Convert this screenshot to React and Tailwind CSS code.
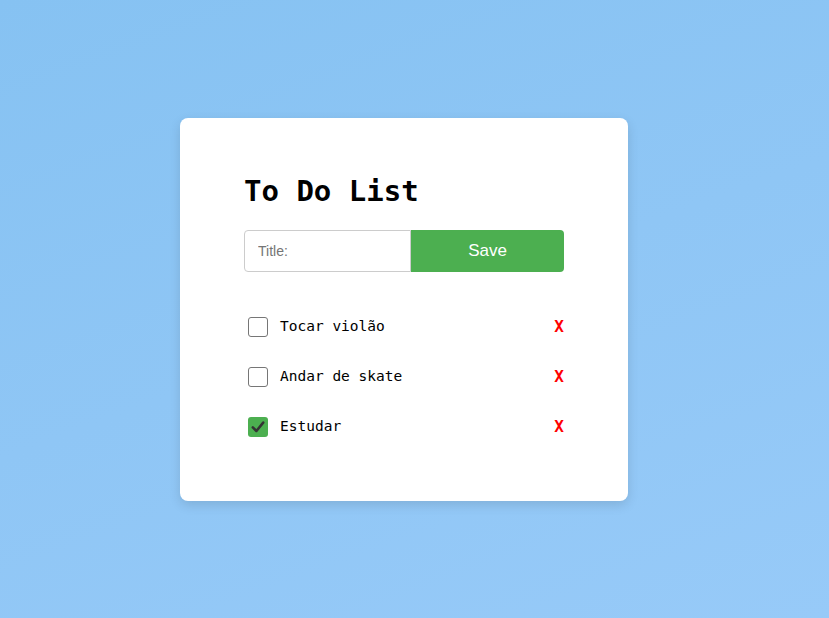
import { useState } from "react";

const mono = { fontFamily: '"DejaVu Sans Mono", "Liberation Mono", monospace' };

function Box({ checked, onClick }) {
  if (checked) {
    return (
      <button onClick={onClick} className="flex h-5 w-5 items-center justify-center rounded-[3px] bg-[#4caf50]">
        <svg viewBox="0 0 20 20" className="h-[16px] w-[16px]">
          <path d="M3.5 10.5 L8 15 L16.5 4.5" fill="none" stroke="#333" strokeWidth="3.2" strokeLinecap="round" strokeLinejoin="round" />
        </svg>
      </button>
    );
  }
  return <button onClick={onClick} className="h-5 w-5 rounded-[3px] border border-[#767676] bg-white" />;
}

export default function App() {
  const [items, setItems] = useState([
    { id: 1, title: "Tocar violão", done: false },
    { id: 2, title: "Andar de skate", done: false },
    { id: 3, title: "Estudar", done: true },
  ]);

  return (
    <div className="flex min-h-[618px] items-center justify-center bg-[linear-gradient(160deg,#86c2f2_0%,#8fc6f5_50%,#97caf8_100%)] pr-[21px]">
      <div className="w-[448px] rounded-lg bg-white px-16 pb-[49px] pt-[55px] shadow-[0_4px_12px_rgba(0,0,0,0.12)]">
        <h1 className="text-[29px] font-bold leading-9 text-black" style={mono}>To Do List</h1>

        <div className="mt-[21px] flex h-[42px]">
          <input
            placeholder="Title:"
            className="h-full w-[167px] rounded-l-[4px] border border-[#cccccc] px-[13px] text-[14px] text-[#333] outline-none placeholder:text-[#757575]"
            style={{ fontFamily: '"Liberation Sans", Arial, sans-serif' }}
          />
          <button
            className="h-full flex-1 rounded-r-[4px] bg-[#4caf50] text-[17px] text-white"
            style={{ fontFamily: '"Liberation Sans", Arial, sans-serif' }}
          >
            Save
          </button>
        </div>

        <ul className="mt-[30px]">
          {items.map((it) => (
            <li key={it.id} className="flex h-[50px] items-center pl-1">
              <Box
                checked={it.done}
                onClick={() => setItems(items.map((x) => (x.id === it.id ? { ...x, done: !x.done } : x)))}
              />
              <span className="ml-3 flex-1 text-[14.5px] text-black" style={mono}>{it.title}</span>
              <button
                onClick={() => setItems(items.filter((x) => x.id !== it.id))}
                className="text-[16px] font-bold text-[#ff0000]"
                style={mono}
              >
                X
              </button>
            </li>
          ))}
        </ul>
      </div>
    </div>
  );
}
